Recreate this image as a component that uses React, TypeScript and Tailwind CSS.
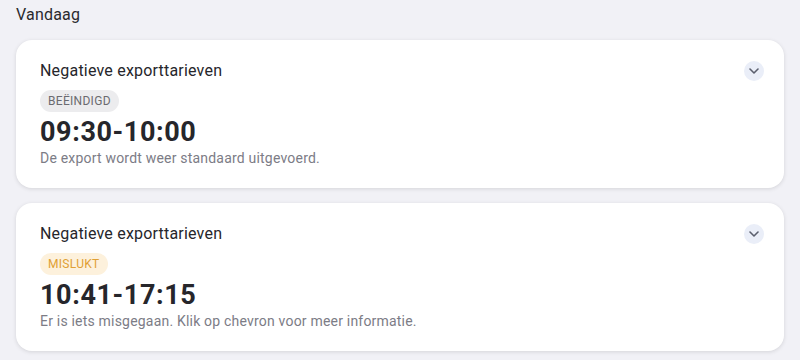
import React from "react";

type Item = {
  title: string;
  status: string;
  badge: string;
  time: string;
  note: string;
};

const items: Item[] = [
  {
    title: "Negatieve exporttarieven",
    status: "BEËINDIGD",
    badge: "bg-[#ececee] text-[#6b6b70]",
    time: "09:30-10:00",
    note: "De export wordt weer standaard uitgevoerd.",
  },
  {
    title: "Negatieve exporttarieven",
    status: "MISLUKT",
    badge: "bg-[#fdf1dc] text-[#e0a034]",
    time: "10:41-17:15",
    note: "Er is iets misgegaan. Klik op chevron voor meer informatie.",
  },
];

const Chevron = () => (
  <button className="flex h-[20px] w-[20px] items-center justify-center rounded-full bg-[#eaeef8]">
    <svg width="10" height="6" viewBox="0 0 10 6" fill="none">
      <path
        d="M1 1l4 4 4-4"
        stroke="#5b5f6e"
        strokeWidth="1.6"
        strokeLinecap="round"
        strokeLinejoin="round"
      />
    </svg>
  </button>
);

const Card = ({ item }: { item: Item }) => (
  <div className="rounded-[16px] bg-white pl-6 pr-5 pt-[21px] pb-[20px] shadow-[0_1px_4px_rgba(0,0,0,0.12)]">
    <div className="flex items-start justify-between">
      <p className="text-[16px] leading-[20px] tracking-[0.2px] text-[#26262b]">
        {item.title}
      </p>
      <Chevron />
    </div>
    <div className="mt-[9px] flex">
      <span
        className={`inline-flex h-[22px] items-center rounded-full px-2 text-[12px] tracking-[0.3px] ${item.badge}`}
      >
        {item.status}
      </span>
    </div>
    <p className="mt-[4px] text-[27px] font-bold leading-[32px] tracking-[0.6px] text-[#26262b]">
      {item.time}
    </p>
    <p className="text-[14px] leading-[20px] tracking-[0.2px] text-[#7c7c86]">
      {item.note}
    </p>
  </div>
);

export default function App() {
  return (
    <div className="h-[360px] w-[800px] overflow-hidden bg-[#f1f1f6] px-4 pt-[4px] font-['Roboto',sans-serif]">
      <h2 className="text-[16px] leading-[22px] tracking-[0.2px] text-[#2a2a2e]">Vandaag</h2>
      <div className="mt-[14px] flex flex-col gap-[15px]">
        {items.map((item, i) => (
          <Card key={i} item={item} />
        ))}
      </div>
    </div>
  );
}
